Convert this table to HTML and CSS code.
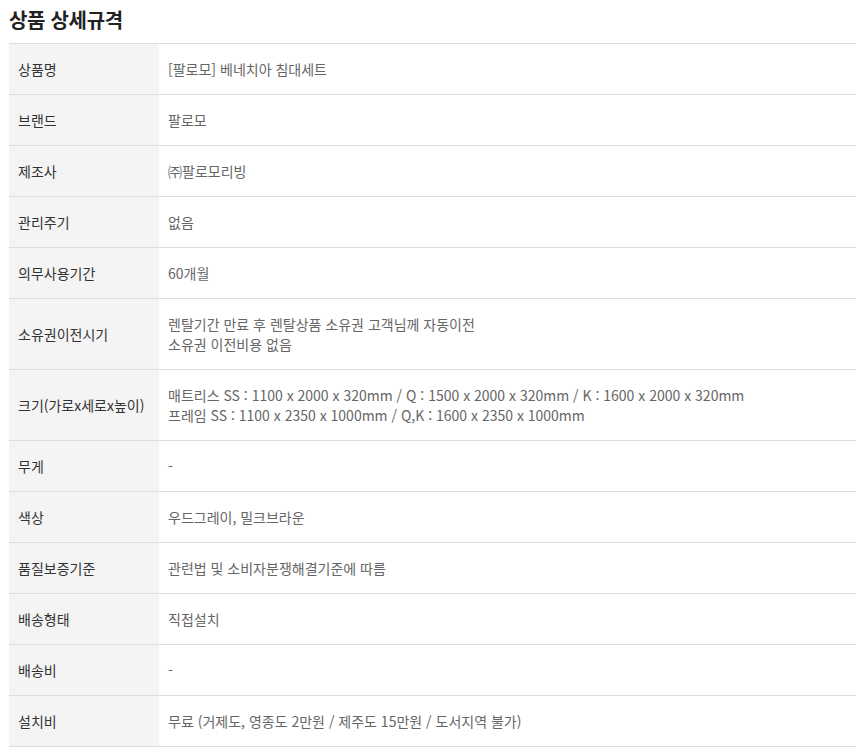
FILE: index.html
```html
<!DOCTYPE html>
<html lang="ko">
<head>
<meta charset="utf-8">
<link rel="stylesheet" href="styles.css">
</head>
<body>
<div class="spec">
  <h2 class="spec-title">상품 상세규격</h2>
  <table class="spec-table">
    <tr><th>상품명</th><td>[팔로모] 베네치아 침대세트</td></tr>
    <tr><th>브랜드</th><td>팔로모</td></tr>
    <tr><th>제조사</th><td>㈜팔로모리빙</td></tr>
    <tr><th>관리주기</th><td>없음</td></tr>
    <tr><th>의무사용기간</th><td>60개월</td></tr>
    <tr><th>소유권이전시기</th><td>렌탈기간 만료 후 렌탈상품 소유권 고객님께 자동이전<br>소유권 이전비용 없음</td></tr>
    <tr><th>크기(가로x세로x높이)</th><td>매트리스 SS : 1100 x 2000 x 320mm / Q : 1500 x 2000 x 320mm / K : 1600 x 2000 x 320mm<br>프레임 SS : 1100 x 2350 x 1000mm / Q,K : 1600 x 2350 x 1000mm</td></tr>
    <tr><th>무게</th><td>-</td></tr>
    <tr><th>색상</th><td>우드그레이, 밀크브라운</td></tr>
    <tr><th>품질보증기준</th><td>관련법 및 소비자분쟁해결기준에 따름</td></tr>
    <tr><th>배송형태</th><td>직접설치</td></tr>
    <tr><th>배송비</th><td>-</td></tr>
    <tr><th>설치비</th><td>무료 (거제도, 영종도 2만원 / 제주도 15만원 / 도서지역 불가)</td></tr>
  </table>
</div>
</body>
</html>
```
FILE: styles.css
```css
html, body {
  margin: 0;
  padding: 0;
  background: #fff;
}
body {
  font-family: "Noto Sans CJK KR", "Noto Sans", sans-serif;
  color: #333;
}
.spec {
  padding: 0 7px 0 9px;
}
.spec-title {
  margin: 0;
  height: 43px;
  line-height: 40px;
  font-size: 20px;
  font-weight: 700;
  color: #222;
  letter-spacing: -0.3px;
}
.spec-table {
  width: 100%;
  border-collapse: collapse;
  border-top: 1px solid #ddd;
  font-size: 14px;
  line-height: 20px;
}
.spec-table th,
.spec-table td {
  border-bottom: 1px solid #ddd;
  padding: 15px 9px;
  text-align: left;
  vertical-align: middle;
}
.spec-table th {
  width: 132px;
  background: #f4f4f4;
  font-weight: 400;
  color: #333;
}
.spec-table td {
  color: #666;
}
```
